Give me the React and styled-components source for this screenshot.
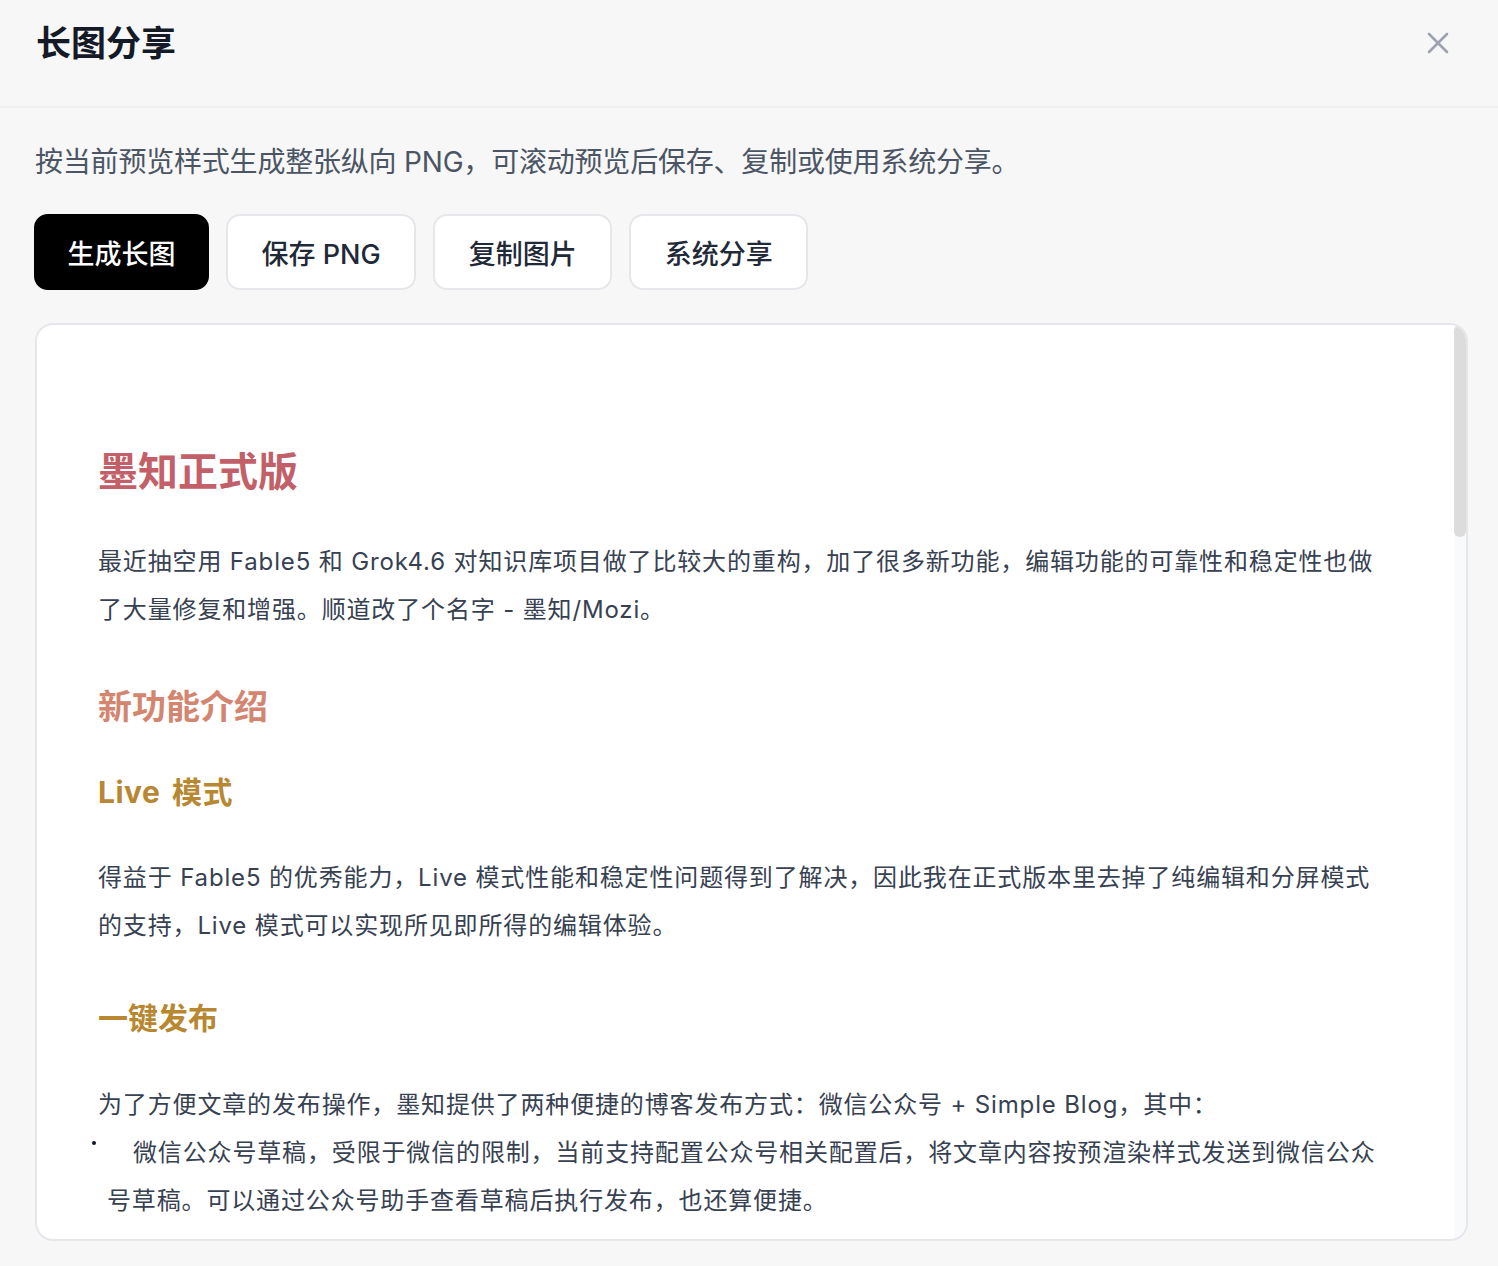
import React from 'react';
import styled, { createGlobalStyle } from 'styled-components';

const GlobalStyle = createGlobalStyle`
	* {
		box-sizing: border-box;
	}

	body {
		margin: 0;
		background: #f7f7f8;
		font-family: 'Inter', 'Noto Sans CJK SC', sans-serif;
		-webkit-font-smoothing: antialiased;
	}
`;

const actions = [
	{ id: 'generate', label: '生成长图', primary: true },
	{ id: 'save', label: '保存 PNG' },
	{ id: 'copy', label: '复制图片' },
	{ id: 'share', label: '系统分享' },
];

const Page = styled.div`
	display: flex;
	flex-direction: column;
	height: 100vh;
`;

const Header = styled.header`
	display: flex;
	justify-content: space-between;
	align-items: flex-start;
	height: 108px;
	padding: 18px 44px 0 36px;
	border-bottom: 2px solid #efeff0;
`;

const Title = styled.h1`
	margin: 0;
	font-size: 35px;
	line-height: 50px;
	font-weight: 700;
	color: #141a26;
`;

const CloseButton = styled.button`
	display: flex;
	align-items: center;
	justify-content: center;
	width: 32px;
	height: 32px;
	margin-top: 9px;
	padding: 0;
	border: none;
	background: none;
	color: #9ca3af;
	cursor: pointer;
`;

const Body = styled.div`
	flex: 1;
	min-height: 0;
	display: flex;
	flex-direction: column;
	padding: 34px 30px 25px 34px;
`;

const Description = styled.p`
	margin: 0 0 0 1px;
	font-size: 28px;
	line-height: 40px;
	color: #4b5563;
	letter-spacing: -0.2px;
`;

const Toolbar = styled.div`
	display: flex;
	gap: 17px;
	margin-top: 32px;
`;

const ActionButton = styled.button`
	height: 76px;
	padding: 0 ${(p) => (p.$primary ? 31.5 : 33.5)}px;
	border-radius: 14px;
	border: 2px solid ${(p) => (p.$primary ? '#000' : '#e5e7eb')};
	background: ${(p) => (p.$primary ? '#000' : '#fff')};
	color: ${(p) => (p.$primary ? '#fff' : '#1f2937')};
	font-family: inherit;
	font-size: 27px;
	font-weight: 500;
	cursor: pointer;
`;

const Preview = styled.div`
	flex: 1;
	min-height: 0;
	display: flex;
	margin: 33px 0 0 1px;
	border: 2px solid #e5e7eb;
	border-radius: 18px;
	background: #fff;
	overflow: hidden;
`;

const Article = styled.article`
	flex: 1;
	padding: 119px 0 0 61px;
	overflow: hidden;
	letter-spacing: 0.85px;
`;

const Track = styled.div`
	width: 12px;
	background: #f9fafb;
`;

const Thumb = styled.div`
	height: 212px;
	border-radius: 6px;
	background: #dcdcdc;
`;

const Heading = styled.h2`
	margin: ${(p) => p.$gap}px 0 0;
	font-size: ${(p) => p.$size}px;
	line-height: ${(p) => p.$lh}px;
	font-weight: 700;
	letter-spacing: ${(p) => p.$spacing || 0}px;
	word-spacing: ${(p) => (p.$spacing ? 4 : 0)}px;
	color: ${(p) => p.$color};
`;

const Paragraph = styled.p`
	margin: ${(p) => p.$gap || 0}px 0 0;
	font-size: 24px;
	line-height: 48px;
	color: #374151;
	white-space: nowrap;
`;

const List = styled.ul`
	margin: 0;
	padding: 0;
	list-style: none;
`;

const ListItem = styled.li`
	position: relative;
	padding-left: 9px;
	text-indent: 26px;
	font-size: 24px;
	line-height: 48px;
	color: #374151;
	white-space: nowrap;

	&::before {
		content: '';
		position: absolute;
		left: -6px;
		top: 12px;
		width: 4px;
		height: 4px;
		border-radius: 50%;
		background: #111827;
	}
`;

const CloseIcon = () => (
	<svg width="22" height="22" viewBox="0 0 22 22" fill="none">
		<path d="M2 2L20 20M20 2L2 20" stroke="currentColor" strokeWidth="2.6" strokeLinecap="round" />
	</svg>
);

export default function App() {
	return (
		<Page>
			<GlobalStyle />
			<Header>
				<Title>长图分享</Title>
				<CloseButton aria-label="关闭">
					<CloseIcon />
				</CloseButton>
			</Header>
			<Body>
				<Description>按当前预览样式生成整张纵向 PNG，可滚动预览后保存、复制或使用系统分享。</Description>
				<Toolbar>
					{actions.map((a) => (
						<ActionButton key={a.id} $primary={a.primary}>
							{a.label}
						</ActionButton>
					))}
				</Toolbar>
				<Preview>
					<Article>
						<Heading as="h1" $size={40} $lh={56} $gap={0} $color="#c35f69">
							墨知正式版
						</Heading>
						<Paragraph $gap={38}>
							最近抽空用 Fable5 和 Grok4.6 对知识库项目做了比较大的重构，加了很多新功能，编辑功能的可靠性和稳定性也做
							<br />
							了大量修复和增强。顺道改了个名字 - 墨知/Mozi。
						</Paragraph>
						<Heading $size={34} $lh={46} $gap={50} $color="#d4856f">
							新功能介绍
						</Heading>
						<Heading as="h3" $size={30} $lh={40} $gap={42} $spacing={0.5} $color="#b78732">
							Live 模式
						</Heading>
						<Paragraph $gap={42}>
							得益于 Fable5 的优秀能力，Live 模式性能和稳定性问题得到了解决，因此我在正式版本里去掉了纯编辑和分屏模式
							<br />
							的支持，Live 模式可以实现所见即所得的编辑体验。
						</Paragraph>
						<Heading as="h3" $size={30} $lh={40} $gap={48} $color="#b78732">
							一键发布
						</Heading>
						<Paragraph $gap={43}>
							为了方便文章的发布操作，墨知提供了两种便捷的博客发布方式：微信公众号 + Simple Blog，其中：
						</Paragraph>
						<List>
							<ListItem>
								微信公众号草稿，受限于微信的限制，当前支持配置公众号相关配置后，将文章内容按预渲染样式发送到微信公众
								<br />
								号草稿。可以通过公众号助手查看草稿后执行发布，也还算便捷。
							</ListItem>
						</List>
					</Article>
					<Track>
						<Thumb />
					</Track>
				</Preview>
			</Body>
		</Page>
	);
}
